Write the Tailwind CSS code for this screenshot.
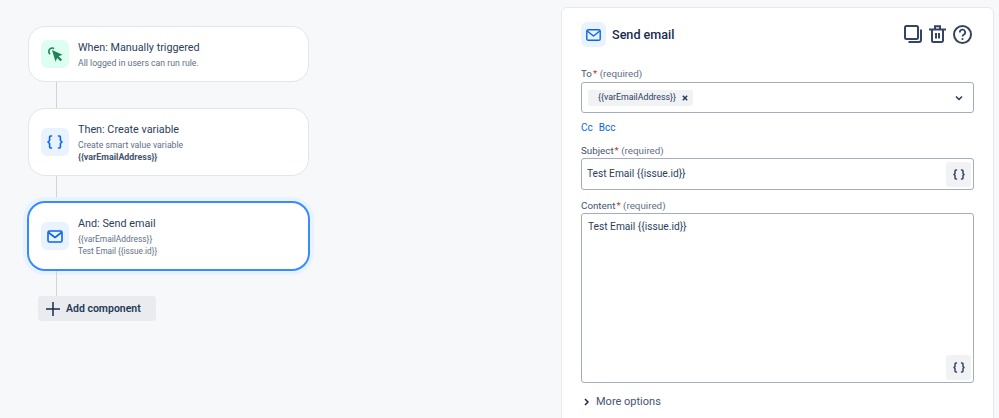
<!doctype html>
<html>
<head>
<meta charset="utf-8">
<script src="https://cdn.jsdelivr.net/npm/@tailwindcss/browser@4"></script>
</head>
<body class="m-0 bg-[#f7f8f9]">
<div class="w-[999px] h-[418px] overflow-hidden flex font-['Roboto','Noto_Sans',sans-serif] text-[#253858]">
  <!-- canvas -->
  <div class="w-[561px] shrink-0 pl-[28px] pt-[26px]">
    <div class="w-[281px] h-[56px] rounded-[17px] bg-white border border-[#e3e5e9] flex items-center pl-[12px]">
      <div class="w-[28px] h-[28px] rounded-[6px] bg-[#dcfff1] flex items-center justify-center shrink-0">
        <svg width="16" height="16" viewBox="0 0 16 16" fill="none"><path d="M6.500 2.300A3.400 3.400 0 0 0 1.800 5.600c0 .8.300 1.500.8 2" stroke="#1f845a" stroke-width="1.600" stroke-linecap="round"/><path d="M5 4l10.500 4.800-3.800 1.500 3.400 3.400-1.600 1.600-3.400-3.400-1.600 3.800z" fill="#1f845a"/></svg>
      </div>
      <div class="ml-[9px]">
        <div class="text-[10.8px] h-[16px] leading-[18px] text-[#2c3e5d]">When: Manually triggered</div>
        <div class="text-[8.7px] leading-[12px] mt-[2px] text-[#626f86]">All logged in users can run rule.</div>
      </div>
    </div>
    <div class="w-px h-[26px] bg-[#d0d3d9] ml-[28px]"></div>
    <div class="w-[281px] h-[68px] rounded-[17px] bg-white border border-[#e3e5e9] flex items-center pl-[12px]">
      <div class="w-[28px] h-[28px] rounded-[6px] bg-[#e9f2ff] flex items-center justify-center shrink-0">
        <svg width="16" height="14" viewBox="0 0 16 14" fill="none" stroke="#0c66e4" stroke-width="1.600" stroke-linecap="round" stroke-linejoin="round"><path d="M4.500 1H3.600a1 1 0 0 0-1 1v3.500L1 7l1.600 1.500V12a1 1 0 0 0 1 1h.9"/><path d="M11.500 1h.9a1 1 0 0 1 1 1v3.500L15 7l-1.600 1.500V12a1 1 0 0 1-1 1h-.9"/></svg>
      </div>
      <div class="ml-[9px]">
        <div class="text-[10.8px] h-[16px] leading-[18px] text-[#2c3e5d]">Then: Create variable</div>
        <div class="text-[8.7px] leading-[12px] mt-[2px] text-[#626f86]">Create smart value variable</div>
        <div class="text-[8.9px] leading-[12px] font-bold text-[#44546f]">{{varEmailAddress}}</div>
      </div>
    </div>
    <div class="w-px h-[25px] bg-[#d0d3d9] ml-[28px]"></div>
    <div class="w-[283px] h-[70px] -ml-px rounded-[18px] bg-white border-2 border-[#388bff] shadow-[0_0_0_4px_#e9f2ff] flex items-center pl-[12px]">
      <div class="w-[28px] h-[28px] rounded-[6px] bg-[#e9f2ff] flex items-center justify-center shrink-0">
        <svg width="16" height="13" viewBox="0 0 16 13" fill="none" stroke="#0c66e4" stroke-width="1.600" stroke-linejoin="round"><rect x="1" y="1" width="14" height="11" rx="1.500"/><path d="M1.500 2.500L8 7.500l6.500-5"/></svg>
      </div>
      <div class="ml-[9px]">
        <div class="text-[10.8px] h-[16px] leading-[18px] text-[#2c3e5d]">And: Send email</div>
        <div class="text-[8.4px] leading-[12px] mt-[2px] text-[#626f86]">{{varEmailAddress}}</div>
        <div class="text-[8.2px] leading-[12px] text-[#626f86]">Test Email {{issue.id}}</div>
      </div>
    </div>
    <div class="w-px h-[25px] bg-[#d0d3d9] ml-[28px]"></div>
    <div class="ml-[10px] w-[118px] h-[25px] rounded-[3px] bg-[#e9ebee] flex items-center pl-[8px] gap-[6px]">
      <svg width="14" height="14" viewBox="0 0 14 14" fill="none" stroke="#172b4d" stroke-width="1.500"><path d="M7 0v14M0 7h14"/></svg>
      <span class="text-[10.5px] font-semibold text-[#253858] leading-none mt-[1px]">Add component</span>
    </div>
  </div>
  <!-- panel -->
  <div class="w-[433px] h-[425px] mt-[7px] bg-white border border-[#e6e8ec] rounded-[6px] pl-[19px] pr-[18px] pt-[14px]">
    <div class="flex items-center h-[25px]">
      <div class="w-[25px] h-[25px] rounded-[6px] bg-[#e9f2ff] flex items-center justify-center">
        <svg width="15" height="12" viewBox="0 0 15 12" fill="none" stroke="#0c66e4" stroke-width="1.400" stroke-linejoin="round"><rect x=".8" y=".8" width="13.400" height="10.400" rx="1.300"/><path d="M1.200 2L7.500 7l6.300-5"/></svg>
      </div>
      <div class="ml-[6px] mt-[1px] text-[12.6px] font-medium text-[#172b4d]">Send email</div>
      <div class="ml-auto mr-[3px] -mt-[1px] flex items-center gap-[7px]">
        <svg width="18" height="18" viewBox="0 0 18 18" fill="none" stroke="#344563" stroke-width="2"><rect x="1" y="1" width="13" height="13" rx="1.500"/><path d="M17 4.500V15a2 2 0 0 1-2 2H4.500"/></svg>
        <svg width="17" height="18" viewBox="0 0 17 18" fill="none" stroke="#344563" stroke-width="2"><path d="M0 4.500h17M6 4V1.200h5V4M3 5v10.500A1.500 1.500 0 0 0 4.500 17h8a1.500 1.500 0 0 0 1.500-1.500V5M7 8v5.500M10 8v5.500"/></svg>
        <svg width="19" height="19" viewBox="0 0 19 19" fill="none" stroke="#344563" stroke-width="2"><circle cx="9.500" cy="9.500" r="8.500"/><path d="M6.800 7.400a2.700 2.700 0 1 1 3.900 2.400c-.8.400-1.200.9-1.200 1.700" stroke-width="1.800"/><circle cx="9.500" cy="14" r="1.100" fill="#344563" stroke="none"/></svg>
      </div>
    </div>
    <div class="mt-[18px] h-[16px] text-[9.8px] leading-[18px] text-[#44546f]"><span>To</span><span class="text-[#c9372c] ml-[1px]">*</span> <span class="text-[#626f86]">(required)</span></div>
    <div class="mt-[1px] w-[393px] h-[31px] rounded-[3px] border border-[#a5adba] bg-white flex items-center pl-[6px] pr-[10px]">
      <div class="h-[16px] bg-[#f1f2f4] rounded-[2px] flex items-center pl-[10px] pr-[5px] gap-[6px]">
        <span class="text-[8.8px] text-[#2c3e5d] leading-none">{{varEmailAddress}}</span>
        <svg width="6" height="6" viewBox="0 0 6 6" stroke="#253858" stroke-width="1.400"><path d="M.8.800l4.400 4.400M5.200.800L.8 5.200"/></svg>
      </div>
      <svg class="ml-auto" width="8" height="6" viewBox="0 0 8 6" fill="none" stroke="#253858" stroke-width="1.500"><path d="M1 1.500l3 3 3-3"/></svg>
    </div>
    <div class="mt-[8px] h-[14px] flex gap-[6px] text-[10px] leading-[14px] text-[#0c66e4]"><span>Cc</span><span>Bcc</span></div>
    <div class="mt-[7px] h-[16px] text-[9.8px] leading-[18px] text-[#44546f]"><span>Subject</span><span class="text-[#c9372c] ml-[1px]">*</span> <span class="text-[#626f86]">(required)</span></div>
    <div class="w-[393px] h-[32px] rounded-[3px] border border-[#a5adba] bg-white flex items-center pl-[5px] pr-[2px]">
      <span class="text-[10.2px] text-[#2c3e5d]">Test Email {{issue.id}}</span>
      <div class="ml-auto w-[25px] h-[25px] rounded-[3px] bg-[#f1f2f4] flex items-center justify-center">
        <svg width="12" height="11" viewBox="0 0 12 11" fill="none" stroke="#344563" stroke-width="1.500" stroke-linecap="round" stroke-linejoin="round"><path d="M3.500 1H3a1 1 0 0 0-1 1v2.500L1 5.500l1 1V9a1 1 0 0 0 1 1h.5M8.500 1H9a1 1 0 0 1 1 1v2.500l1 1-1 1V9a1 1 0 0 1-1 1h-.5"/></svg>
      </div>
    </div>
    <div class="mt-[7px] h-[16px] text-[9.8px] leading-[18px] text-[#44546f]"><span>Content</span><span class="text-[#c9372c] ml-[1px]">*</span> <span class="text-[#626f86]">(required)</span></div>
    <div class="relative w-[393px] h-[170px] rounded-[3px] border border-[#a5adba] bg-white pl-[6px] pt-[5px]">
      <div class="text-[10.2px] leading-[16px] text-[#2c3e5d]">Test Email {{issue.id}}</div>
      <div class="absolute right-[2px] bottom-[2px] w-[25px] h-[25px] rounded-[3px] bg-[#f1f2f4] flex items-center justify-center">
        <svg width="12" height="11" viewBox="0 0 12 11" fill="none" stroke="#344563" stroke-width="1.500" stroke-linecap="round" stroke-linejoin="round"><path d="M3.500 1H3a1 1 0 0 0-1 1v2.500L1 5.500l1 1V9a1 1 0 0 0 1 1h.5M8.500 1H9a1 1 0 0 1 1 1v2.500l1 1-1 1V9a1 1 0 0 1-1 1h-.5"/></svg>
      </div>
    </div>
    <div class="mt-[11px] h-[16px] flex items-center pl-[3px] text-[11px] text-[#44546f]">
      <svg width="5" height="8" viewBox="0 0 5 8" fill="none" stroke="#172b4d" stroke-width="1.500"><path d="M1 1l3 3-3 3"/></svg>
      <span class="ml-[7px]">More options</span>
    </div>
  </div>
</div>
</body>
</html>
